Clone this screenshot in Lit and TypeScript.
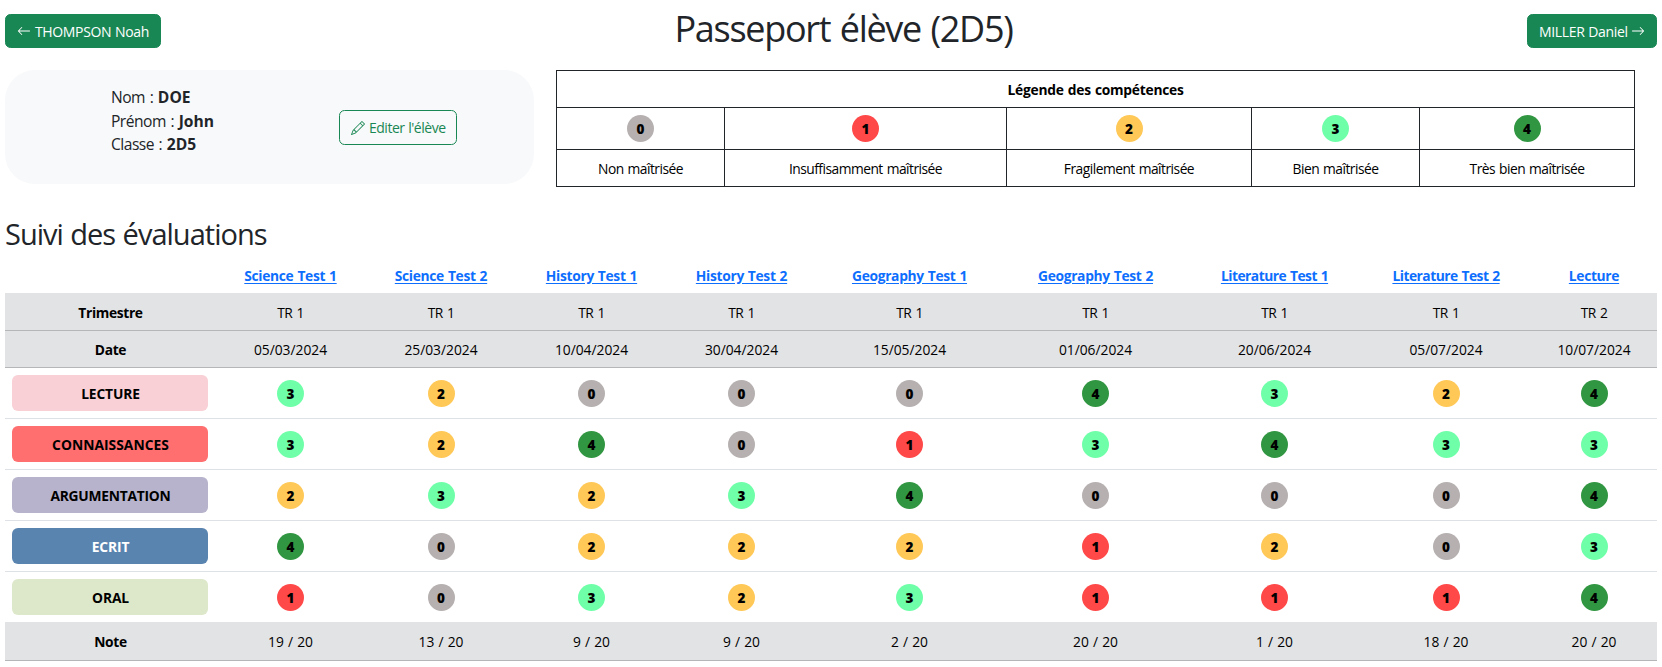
import { LitElement, html, svg, css } from "lit";
import { customElement } from "lit/decorators.js";
import { classMap } from "lit/directives/class-map.js";

interface Evaluation {
  name: string;
  term: string;
  date: string;
  levels: number[];
  mark: string;
}

const EVALUATIONS: Evaluation[] = [
  { name: "Science Test 1", term: "TR 1", date: "05/03/2024", levels: [3, 3, 2, 4, 1], mark: "19 / 20" },
  { name: "Science Test 2", term: "TR 1", date: "25/03/2024", levels: [2, 2, 3, 0, 0], mark: "13 / 20" },
  { name: "History Test 1", term: "TR 1", date: "10/04/2024", levels: [0, 4, 2, 2, 3], mark: "9 / 20" },
  { name: "History Test 2", term: "TR 1", date: "30/04/2024", levels: [0, 0, 3, 2, 2], mark: "9 / 20" },
  { name: "Geography Test 1", term: "TR 1", date: "15/05/2024", levels: [0, 1, 4, 2, 3], mark: "2 / 20" },
  { name: "Geography Test 2", term: "TR 1", date: "01/06/2024", levels: [4, 3, 0, 1, 1], mark: "20 / 20" },
  { name: "Literature Test 1", term: "TR 1", date: "20/06/2024", levels: [3, 4, 0, 2, 1], mark: "1 / 20" },
  { name: "Literature Test 2", term: "TR 1", date: "05/07/2024", levels: [2, 3, 0, 0, 1], mark: "18 / 20" },
  { name: "Lecture", term: "TR 2", date: "10/07/2024", levels: [4, 3, 4, 3, 4], mark: "20 / 20" },
];

const SKILLS = ["LECTURE", "CONNAISSANCES", "ARGUMENTATION", "ECRIT", "ORAL"];

const LEGEND = [
  "Non maîtrisée",
  "Insuffisamment maîtrisée",
  "Fragilement maîtrisée",
  "Bien maîtrisée",
  "Très bien maîtrisée",
];

const arrowLeft = svg`<path fill-rule="evenodd" d="M15 8a.5.5 0 0 0-.5-.5H2.707l3.147-3.146a.5.5 0 1 0-.708-.708l-4 4a.5.5 0 0 0 0 .708l4 4a.5.5 0 0 0 .708-.708L2.707 8.5H14.5A.5.5 0 0 0 15 8z"/>`;
const arrowRight = svg`<path fill-rule="evenodd" d="M1 8a.5.5 0 0 1 .5-.5h11.793l-3.147-3.146a.5.5 0 0 1 .708-.708l4 4a.5.5 0 0 1 0 .708l-4 4a.5.5 0 0 1-.708-.708L13.293 8.5H1.5A.5.5 0 0 1 1 8z"/>`;
const pencil = svg`<path d="M12.146.146a.5.5 0 0 1 .708 0l3 3a.5.5 0 0 1 0 .708l-10 10a.5.5 0 0 1-.168.11l-5 2a.5.5 0 0 1-.65-.65l2-5a.5.5 0 0 1 .11-.168l10-10zM11.207 2.5 13.5 4.793 14.793 3.5 12.5 1.207 11.207 2.5zm1.586 3L10.5 3.207 4 9.707V10h.5a.5.5 0 0 1 .5.5v.5h.5a.5.5 0 0 1 .5.5v.5h.293l6.5-6.5zm-9.761 5.175-.106.106-1.528 3.821 3.821-1.528.106-.106A.5.5 0 0 1 5 12.5V12h-.5a.5.5 0 0 1-.5-.5V11h-.5a.5.5 0 0 1-.468-.325z"/>`;

@customElement("app-root")
export class AppRoot extends LitElement {
  static styles = css`
    :host {
      display: block;
      box-sizing: border-box;
      height: 667px;
      overflow: hidden;
      padding: 0 5px;
      background: #fff;
      color: #212529;
      font-family: "Open Sans", "Noto Sans", sans-serif;
      font-size: 15.6px;
      line-height: 1.5;
    }
    * { box-sizing: border-box; }
    h1, h2, p { margin: 0; font-weight: 400; }
    .top {
      display: grid;
      grid-template-columns: 1fr auto 1fr;
      align-items: start;
      height: 70px;
      padding-top: 14px;
    }
    .top h1 {
      margin-top: -7px;
      font-size: 36px;
      line-height: 44px;
      letter-spacing: -0.036em;
      word-spacing: 0.04em;
      padding-left: 25px;
    }
    .btn {
      display: inline-flex;
      align-items: center;
      gap: 4px;
      height: 34px;
      padding: 0 11px;
      border: 1px solid #198754;
      border-radius: 5.5px;
      background: #198754;
      color: #fff;
      font-size: 14px;
      letter-spacing: -0.025em;
      word-spacing: 0.04em;
      white-space: nowrap;
      text-decoration: none;
    }
    .btn svg { width: 14px; height: 14px; fill: currentColor; flex: none; }
    .btn.prev { justify-self: start; width: 156px; }
    .btn.next { justify-self: end; width: 130px; gap: 3px; }
    .btn.outline {
      background: transparent;
      color: #198754;
      width: 118px;
      height: 35px;
      letter-spacing: -0.035em;
    }
    .summary { display: flex; gap: 22px; height: 117px; align-items: flex-start; }
    .card {
      width: 529px;
      height: 114px;
      border-radius: 30px;
      background: #f8f9fa;
      display: flex;
      padding-left: 106px;
    }
    .identity { width: 228px; padding-top: 16px; line-height: 23.6px; letter-spacing: -0.033em; word-spacing: 0.07em; }
    .identity b { letter-spacing: 0; }
    .edit { padding-top: 40px; line-height: 0; }
    table { border-collapse: collapse; table-layout: fixed; color: #000; font-size: 13.8px; text-align: center; }
    th, td { padding: 0; vertical-align: middle; line-height: 20px; }
    .legend { width: 1079px; letter-spacing: -0.037em; word-spacing: 0.06em; }
    .legend th, .legend td { border: 1px solid #212529; }
    .legend th { letter-spacing: -0.018em; height: 37px; padding-top: 2px; }
    .legend .levels td { height: 42px; }
    .legend .labels td { height: 37px; padding-top: 2px; }
    .l0 { width: 168px; }
    .l1 { width: 282px; }
    .l2 { width: 245px; }
    .l3 { width: 168px; }
    .l4 { width: 215px; }
    .level {
      display: block;
      width: 27px;
      height: 27px;
      margin: 0 auto;
      border-radius: 50%;
      color: #000;
      font-weight: 800;
      font-size: 13.5px;
      line-height: 28px;
      letter-spacing: 0;
    }
    .v0 { background: #b6b0b0; }
    .v1 { background: #ff4848; }
    .v2 { background: #ffc857; }
    .v3 { background: #6fffa9; }
    .v4 { background: #319641; }
    h2 {
      height: 72px;
      padding-top: 26px;
      font-size: 29px;
      line-height: 42px;
      letter-spacing: -0.034em;
      word-spacing: 0.03em;
    }
    .tracking { width: 1652px; }
    .tracking th { font-weight: 700; }
    .names th { height: 34px; padding-bottom: 1px; letter-spacing: -0.023em; word-spacing: 0.05em; }
    .names a { color: #0d6efd; text-decoration: underline; text-underline-offset: 2px; }
    .names .tight { letter-spacing: -0.036em; }
    .shade th, .shade td { background: #e2e3e5; height: 37px; padding-top: 3px; border-bottom: 1px solid #b5b6b7; }
    .shade th { letter-spacing: -0.025em; padding-left: 1px; }
    .shade.note th, .shade.note td { height: 38px; padding-top: 3px; }
    .term td { letter-spacing: -0.05em; word-spacing: 0.12em; }
    .note td { word-spacing: 0.04em; }
    .skill th, .skill td { height: 51px; border-bottom: 1px solid #dee2e6; }
    .skill td { padding-top: 1px; }
    .skill.last th, .skill.last td { border-bottom: 0; }
    .skill th { padding: 1px 7px 0; }
    .pill {
      display: block;
      height: 36px;
      border-radius: 6px;
      line-height: 37px;
      letter-spacing: -0.01em;
      padding-left: 1px;
    }
    .p0 { background: #f8d0d5; }
    .p1 { background: #ff6f6f; letter-spacing: 0.003em; }
    .p2 { background: #b7b3cc; letter-spacing: -0.018em; }
    .p3 { background: #5a84b0; color: #fff; }
    .p4 { background: #dde8ca; }
    .c0 { width: 210px; }
    .c1 { width: 151px; }
    .c2 { width: 150px; }
    .c3 { width: 151px; }
    .c4 { width: 149px; }
    .c5 { width: 187px; }
    .c6 { width: 185px; }
    .c7 { width: 173px; }
    .c8 { width: 170px; }
    .c9 { width: 126px; }
  `;

  private level(value: number) {
    return html`<span class="level v${value}">${value}</span>`;
  }

  private icon(shape: unknown) {
    return html`<svg viewBox="0 0 16 16" aria-hidden="true">${shape}</svg>`;
  }

  render() {
    return html`
      <header class="top">
        <a class="btn prev">${this.icon(arrowLeft)}<span>THOMPSON Noah</span></a>
        <h1>Passeport élève (2D5)</h1>
        <a class="btn next"><span>MILLER Daniel</span>${this.icon(arrowRight)}</a>
      </header>

      <section class="summary">
        <div class="card">
          <div class="identity">
            <p>Nom : <b>DOE</b></p>
            <p>Prénom : <b>John</b></p>
            <p>Classe : <b>2D5</b></p>
          </div>
          <div class="edit"><a class="btn outline">${this.icon(pencil)}<span>Editer l'élève</span></a></div>
        </div>
        <table class="legend">
          <colgroup>${LEGEND.map((_, i) => html`<col class="l${i}" />`)}</colgroup>
          <tbody>
            <tr><th colspan="5">Légende des compétences</th></tr>
            <tr class="levels">${LEGEND.map((_, i) => html`<td>${this.level(i)}</td>`)}</tr>
            <tr class="labels">${LEGEND.map((label) => html`<td>${label}</td>`)}</tr>
          </tbody>
        </table>
      </section>

      <h2>Suivi des évaluations</h2>
      <table class="tracking">
        <colgroup>${["", ...EVALUATIONS].map((_, i) => html`<col class="c${i}" />`)}</colgroup>
        <thead>
          <tr class="names">
            <th></th>
            ${EVALUATIONS.map((e) => html`<th><a class=${classMap({ tight: e.name.startsWith("Literature") })}>${e.name}</a></th>`)}
          </tr>
        </thead>
        <tbody>
          <tr class="shade term"><th>Trimestre</th>${EVALUATIONS.map((e) => html`<td>${e.term}</td>`)}</tr>
          <tr class="shade"><th>Date</th>${EVALUATIONS.map((e) => html`<td>${e.date}</td>`)}</tr>
          ${SKILLS.map(
            (skill, row) => html`<tr class=${classMap({ skill: true, last: row === SKILLS.length - 1 })}>
              <th><span class="pill p${row}">${skill}</span></th>
              ${EVALUATIONS.map((e) => html`<td>${this.level(e.levels[row])}</td>`)}
            </tr>`
          )}
          <tr class="shade note"><th>Note</th>${EVALUATIONS.map((e) => html`<td>${e.mark}</td>`)}</tr>
        </tbody>
      </table>
    `;
  }
}
